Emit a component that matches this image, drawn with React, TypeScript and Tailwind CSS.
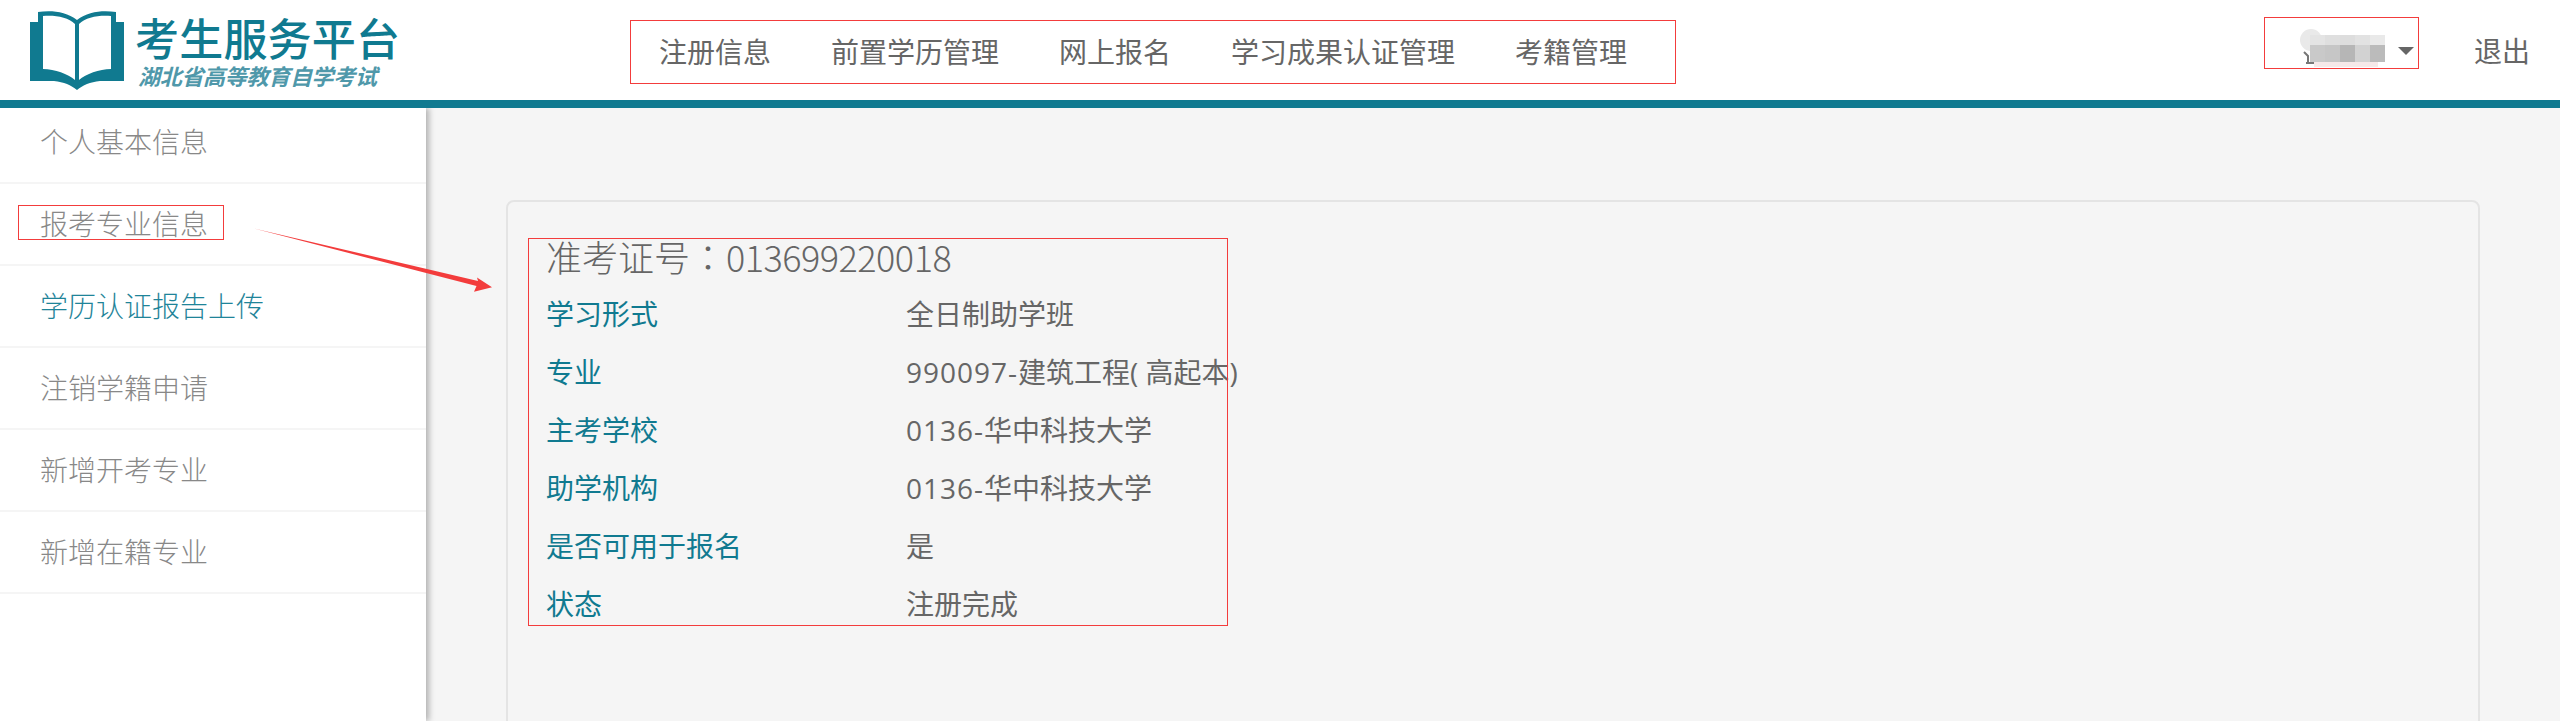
const FONT = "font-['Noto_Sans_CJK_SC','Noto_Sans',sans-serif]";

const NAV_ITEMS = ['注册信息', '前置学历管理', '网上报名', '学习成果认证管理', '考籍管理'];

const SIDE_ITEMS = ['个人基本信息', '报考专业信息', '学历认证报告上传', '注销学籍申请', '新增开考专业', '新增在籍专业'];

const DETAILS = [
  ['学习形式', '全日制助学班'],
  ['专业', '990097-建筑工程( 高起本)'],
  ['主考学校', '0136-华中科技大学'],
  ['助学机构', '0136-华中科技大学'],
  ['是否可用于报名', '是'],
  ['状态', '注册完成'],
];

function BookLogo() {
  return (
    <svg width="94" height="80" viewBox="30 10 94 80" className="shrink-0">
      <path
        d="M30 22H38V12C50 10 66 11 77 20C88 11 104 10 116 12V22H124V81H100C90 82 83 85 77 90C71 85 64 82 54 81H30Z"
        fill="#107a90"
      />
      <path d="M43 16C55 15 68 17 75 24V80C68 74 55 69 43 69Z" fill="#fff" />
      <path d="M111 16C99 15 86 17 79 24V80C86 74 99 69 111 69Z" fill="#fff" />
    </svg>
  );
}

/* Mosaic that hides the user name in the screenshot */
function BlurredName() {
  const top = ['#e4e4e4', '#dfdfdf', '#dddddd', '#e2e2e2', '#e9e9e9'];
  const bottom = ['#c9c9c9', '#c6c6c6', '#b6b6b6', '#d2d2d2', '#bbbbbb'];
  return (
    <svg width="90" height="40" viewBox="0 0 90 40" className="mt-[12px] shrink-0">
      <path d="M4 23L8 27V34M6 34H14" stroke="#777" strokeWidth="2" fill="none" />
      <rect x="14" y="33" width="64" height="5" fill="#f6e9e9" />
      <circle cx="11" cy="11" r="11" fill="#e9e9e9" />
      {top.map((c, i) => (
        <rect key={c} x={10 + i * 15} y={6} width={15} height={10} fill={c} />
      ))}
      {bottom.map((c, i) => (
        <rect key={c} x={10 + i * 15} y={16} width={15} height={17} fill={c} />
      ))}
    </svg>
  );
}

function Header() {
  return (
    <header className="relative z-20 flex h-[108px] shrink-0 items-center border-b-8 border-[#107a90] bg-white">
      <div className="flex w-[630px] shrink-0 items-center gap-[11px] pl-[30px]">
        <BookLogo />
        <div className="flex flex-col">
          <span className="text-[44px] leading-[50px] font-medium tracking-[0.2px] text-[#107a90]">考生服务平台</span>
          <span className="pl-[3px] text-[22px] leading-[26px] font-bold tracking-[-0.3px] text-[#4f98aa] italic">湖北省高等教育自学考试</span>
        </div>
      </div>
      <nav className="mt-[4px] flex h-[64px] w-[1046px] items-center gap-[60px] border border-[#f33c3c] pb-[3px] pl-[28px] text-[28px] text-[#666]">
        {NAV_ITEMS.map((item) => (
          <span key={item}>{item}</span>
        ))}
      </nav>
      <div className="ml-auto flex items-center gap-[55px] pr-[30px]">
        <div className="mb-[14px] flex h-[52px] w-[155px] items-center border border-[#f33c3c] pl-[35px]">
          <BlurredName />
          <span className="mt-[16px] ml-[8px] h-0 w-0 border-x-[8px] border-t-[8px] border-x-transparent border-t-[#666]" />
        </div>
        <span className="text-[28px] text-[#666]">退出</span>
      </div>
    </header>
  );
}

function Sidebar() {
  return (
    <aside className="relative z-10 w-[426px] shrink-0 bg-white shadow-[3px_0_6px_rgba(0,0,0,0.28)]">
      <ul className="-mt-[6px]">
        {SIDE_ITEMS.map((item, i) => (
          <li
            key={item}
            className={`flex h-[82px] items-center border-b-2 border-[#f5f5f5] pb-[2px] pl-[40px] text-[28px] font-light ${
              i === 2 ? 'text-[#1f8499]' : 'text-[#888]'
            }`}
          >
            {item}
          </li>
        ))}
      </ul>
      {/* annotation round the second item */}
      <div className="absolute top-[97px] left-[18px] h-[35px] w-[206px] border border-[#f33c3c]" />
    </aside>
  );
}

/* digits and hyphen run a little wider than the CJK text in the reference */
function DetailValue({ value }: { value: string }) {
  const parts = value.split(/([0-9-]+)/);
  return (
    <dd className="text-[#666]">
      {parts.map((part, i) =>
        i % 2 === 1 ? (
          <span key={i} className="tracking-[1px]">
            {part}
          </span>
        ) : (
          part
        ),
      )}
    </dd>
  );
}

function ExamCard() {
  return (
    <section className="relative h-[700px] rounded-lg border-2 border-[#e4e4e4] pt-[31px] pl-[38px]">
      <h1 className="mb-[6px] h-[46px] text-[36px] leading-[46px] font-light text-[#666]">
        准考证号<span className="font-['Noto_Sans_CJK_TC',sans-serif]">：</span>
        <span className="tracking-[-0.5px]">013699220018</span>
      </h1>
      <dl className="grid grid-cols-[360px_1fr] font-['Open_Sans','Noto_Sans_CJK_SC',sans-serif] text-[28px] leading-[58px]">
        {DETAILS.map(([label, value]) => (
          <div key={label} className="col-span-2 grid grid-cols-subgrid">
            <dt className="text-[#107a90]">{label}</dt>
            <DetailValue value={value} />
          </div>
        ))}
      </dl>
      {/* annotation round the details */}
      <div className="absolute top-[36px] left-[20px] h-[388px] w-[700px] border border-[#f33c3c]" />
    </section>
  );
}

export default function App() {
  return (
    <div className={`relative flex h-[721px] flex-col overflow-hidden bg-[#f5f5f5] ${FONT}`}>
      <Header />
      <div className="flex min-h-0 flex-1">
        <Sidebar />
        <main className="flex-1 px-[80px] pt-[92px]">
          <ExamCard />
        </main>
      </div>
      {/* red annotation arrow */}
      <svg className="absolute top-0 left-0 z-30" width="520" height="320" viewBox="0 0 520 320">
        <path d="M252 228L478 281L477 277.5L492 287.3L474 291.7L476.5 286Z" fill="#f33c3c" />
      </svg>
    </div>
  );
}
